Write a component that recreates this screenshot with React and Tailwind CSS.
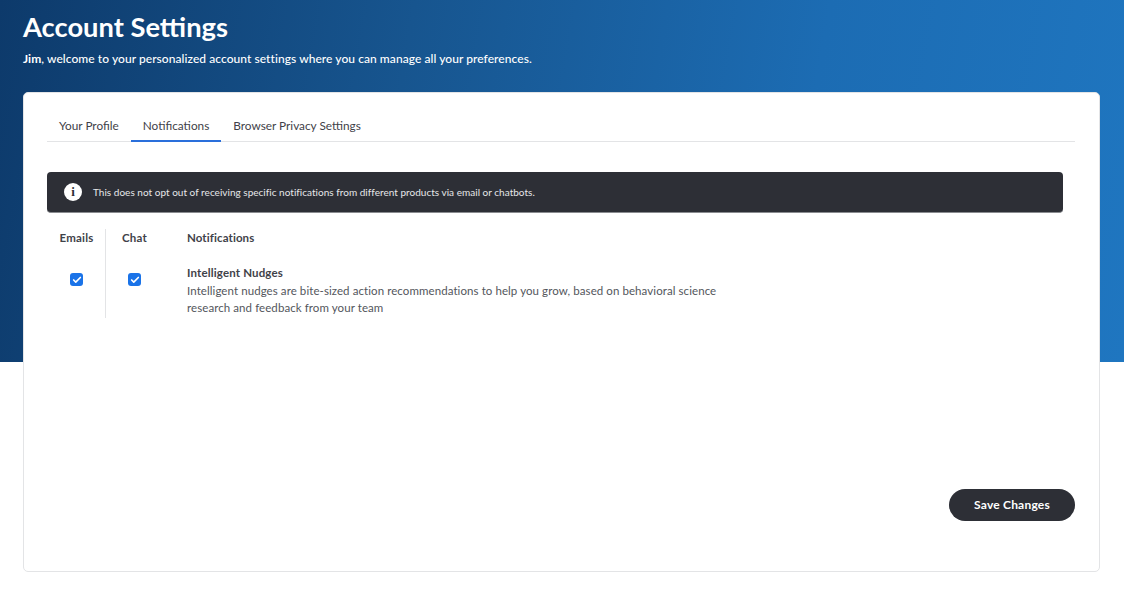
import { Check } from "lucide-react";

const font = { fontFamily: '"Lato", "Liberation Sans", sans-serif' };

function Tick() {
  return (
    <span className="flex h-[13px] w-[13px] items-center justify-center rounded-[3px] bg-[#1a73e8] text-white">
      <Check size={10} strokeWidth={4} />
    </span>
  );
}

export default function App() {
  return (
    <div className="min-h-[589px] bg-white" style={font}>
      {/* Banner */}
      <div className="h-[362px] bg-[linear-gradient(100deg,#0d3a6b_0%,#17558f_35%,#1c6cb3_70%,#1f76c0_100%)] px-[23px] pt-[11px] text-white">
        <h1 className="text-[27.3px] leading-[31px] font-bold">Account Settings</h1>
        <p className="mt-[9px] text-[12px] leading-[16px] font-medium tracking-[0.06px]">
          <span className="font-bold">Jim</span>, welcome to your personalized account settings where you can manage all your preferences.
        </p>
      </div>

      {/* Card */}
      <div className="relative mr-[24px] ml-[23px] -mt-[270px] flex h-[480px] flex-col rounded-[5px] border border-[#e3e4e6] bg-white pt-[16px] pr-[24px] pl-[23px]">
        {/* Tabs */}
        <div className="flex border-b border-[#e3e4e6] text-[11.8px] text-[#3f4249]">
          <div className="-mb-px flex h-[33px] items-center border-y-2 border-transparent px-[12px]">Your Profile</div>
          <div className="-mb-px flex h-[33px] items-center border-t-2 border-b-2 border-t-transparent border-b-[#2a6fdb] px-[12px]">Notifications</div>
          <div className="-mb-px flex h-[33px] items-center border-y-2 border-transparent px-[12px]">Browser Privacy Settings</div>
        </div>

        {/* Info bar */}
        <div className="mt-[30px] mr-[12px] flex h-[41px] items-center gap-[11px] rounded-[4px] border-b border-[#8a8c90] bg-[#2d2f36] pl-[17px] text-[10px] tracking-[0.02px] text-[#e6e7e9]">
          <span className="flex h-[18px] w-[18px] items-center justify-center rounded-full bg-white text-[13px] font-bold text-[#2d2f36]" style={{ fontFamily: '"Liberation Serif", serif' }}>i</span>
          <span>This does not opt out of receiving specific notifications from different products via email or chatbots.</span>
        </div>

        {/* Table */}
        <div className="mt-[16px] flex text-[#3f4249]">
          <div className="flex h-[89px] w-[59px] flex-col items-center border-r border-[#e3e4e6] pl-[1px]">
            <div className="text-[11.5px] leading-[18px] font-bold tracking-[0.2px]">Emails</div>
            <div className="mt-[26px]"><Tick /></div>
          </div>
          <div className="flex w-[57px] flex-col items-center">
            <div className="text-[11.5px] leading-[18px] font-bold tracking-[0.2px]">Chat</div>
            <div className="mt-[26px]"><Tick /></div>
          </div>
          <div className="ml-[24px] flex-1">
            <div className="text-[11.5px] leading-[18px] font-bold tracking-[0.1px]">Notifications</div>
            <div className="mt-[17px] text-[11.5px] leading-[18px] font-bold tracking-[0.15px]">Intelligent Nudges</div>
            <p className="w-[540px] text-[11.5px] leading-[17px] tracking-[0.08px] text-[#53565c]">
              Intelligent nudges are bite-sized action recommendations to help you grow, based on behavioral science research and feedback from your team
            </p>
          </div>
        </div>

        {/* Save */}
        <div className="mt-auto mb-[50px] flex justify-end">
          <button className="h-[32px] w-[126px] rounded-full bg-[#2d2f36] text-[12px] font-bold tracking-[0.2px] text-white">
            Save Changes
          </button>
        </div>
      </div>
    </div>
  );
}
